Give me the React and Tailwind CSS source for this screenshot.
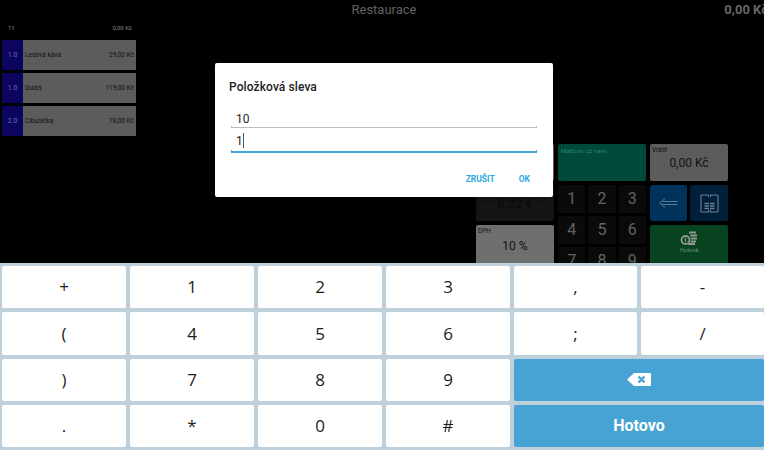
const lines = [
  { qty: "1.0", name: "Ledová káva", price: "29,00 Kč" },
  { qty: "1.0", name: "Guláš", price: "119,00 Kč" },
  { qty: "2.0", name: "Cibulačka", price: "78,00 Kč" },
];

const keyRows = [
  ["+", "1", "2", "3", ",", "-"],
  ["(", "4", "5", "6", ";", "/"],
  [")", "7", "8", "9"],
  [".", "*", "0", "#"],
];

const Key = ({ label }) => (
  <div
    className="flex-1 flex items-center justify-center bg-white rounded-[2px] text-[17px] text-[#1c1c1c]"
    style={{ fontFamily: "'Open Sans', sans-serif" }}
  >
    {label}
  </div>
);

const BlueKey = ({ children }) => (
  <div className="flex-1 flex items-center justify-center bg-[#47a3d3] rounded-[2px] text-white text-[16px] font-bold">
    {children}
  </div>
);

const BackspaceIcon = () => (
  <svg width="24" height="13" viewBox="0 0 24 13">
    <path d="M7 0H23a1 1 0 0 1 1 1V12a1 1 0 0 1-1 1H7L0 6.500Z" fill="#fff" />
    <path d="M11.500 3.500l6 6M17.500 3.500l-6 6" stroke="#47a3d3" strokeWidth="2.400" />
  </svg>
);

const NumKey = ({ label }) => (
  <div className="h-[28px] flex items-center justify-center bg-[#0a0a0a] text-[16px] text-[#626262]">
    {label}
  </div>
);

const Till = () => (
  <div className="flex-1 min-h-0 overflow-hidden flex flex-col bg-black">
    <div className="relative h-5 shrink-0 flex items-center justify-center">
      <span className="text-[13px] text-[#626262] ml-[4px]">Restaurace</span>
      <span className="absolute -right-[4px] text-[13px] font-bold text-[#666]">0,00 Kč</span>
    </div>
    <div className="flex justify-between">
      <div className="w-[136px] pl-[2px]">
        <div className="h-[20px] flex items-center justify-between pl-[6px] pr-[4px] pb-[5px] text-[6px] text-[#8a8a8a]">
          <span>11</span>
          <span>0,00 Kč</span>
        </div>
        <div className="flex flex-col gap-[3px]">
          {lines.map((line) => (
            <div key={line.name} className="h-[30px] flex bg-[#5c5c5c]">
              <div className="w-[21px] flex items-center justify-center bg-[#0c0560] text-[7px] text-[#6f6f9c]">
                {line.qty}
              </div>
              <div className="flex-1 flex items-center justify-between pl-[2px] pr-[2px] pt-[1px] text-[6.500px] text-[#111]">
                <span>{line.name}</span>
                <span>{line.price}</span>
              </div>
            </div>
          ))}
        </div>
      </div>
      <div className="mr-[36px] mt-[124px] grid grid-cols-[78px_88px_78px] gap-x-[4px]">
        <div className="flex flex-col gap-[4px]">
          <div className="h-[37px] bg-[#5c5c5c] rounded-[2px]" />
          <div className="h-[36px] flex items-center justify-center bg-[#151515] rounded-[2px] text-[13px] text-[#0a0a0a] pt-[2px]">
            8,22 €
          </div>
          <div className="h-[60px] bg-[#6f6f6f] rounded-[2px] px-[2px] py-[1px] text-[#111]">
            <div className="text-[6.500px] leading-[10px]">DPH</div>
            <div className="text-[12px] leading-[16px] text-center mt-[2px]">10 %</div>
          </div>
        </div>
        <div className="flex flex-col gap-[4px]">
          <div className="h-[37px] bg-[#004a3b] rounded-[2px] px-[3px] py-[2px] text-[6px] tracking-[0.3px] text-[#2b8a75]">
            Mattoni už není
          </div>
          <div className="grid grid-cols-3 gap-[3px]">
            {["1", "2", "3", "4", "5", "6", "7", "8", "9"].map((n) => (
              <NumKey key={n} label={n} />
            ))}
          </div>
        </div>
        <div className="flex flex-col gap-[4px]">
          <div className="h-[37px] bg-[#5c5c5c] rounded-[2px] px-[2px] py-[1px] text-[#111]">
            <div className="text-[6.500px] leading-[10px]">Vrátit</div>
            <div className="text-[12px] leading-[16px] text-center">0,00 Kč</div>
          </div>
          <div className="flex gap-[3px]">
            <div className="w-[37px] h-[36px] flex items-center justify-center bg-[#00335c] rounded-[2px]">
              <svg width="19" height="10" viewBox="0 0 19 10" fill="none" stroke="#6f8ca6" strokeWidth="0.800">
                <path d="M6 .5L.8 5 6 9.500M3.500 3.500H18.500M3.500 6.500H18.500" />
              </svg>
            </div>
            <div className="w-[38px] h-[36px] flex items-center justify-center bg-[#001f3a] rounded-[2px]">
              <svg width="19" height="19" viewBox="0 0 19 19" fill="none" stroke="#6d7f90" strokeWidth="1.100">
                <path d="M8.500 1H2a1 1 0 0 0-1 1V17a1 1 0 0 0 1 1H8.500V16M10.500 16V18H17a1 1 0 0 0 1-1V2a1 1 0 0 0-1-1H10.500V3M8.500 1V3" />
                <path d="M4.500 9.500H9M10 9.500H14.500M4.500 12H9M10 12H14.500M4.500 14.500H9M10 14.500H14.500" strokeWidth="1.600" />
              </svg>
            </div>
          </div>
          <div className="h-[60px] flex flex-col items-center bg-[#08431f] rounded-[2px] pt-[6px]">
            <svg width="18" height="14" viewBox="0 0 18 14">
              <circle cx="5.500" cy="9" r="4" fill="none" stroke="#8f9a92" strokeWidth="1.800" />
              <path d="M5.500 7V11" stroke="#8f9a92" strokeWidth="1.200" />
              <path d="M9 0.500H16V2.500H9ZM10 3.500H17V5.500H10.500ZM11 6.500H17V8.500H11ZM11 9.500H16V11.500H10.500ZM9 12H15V14H7.500Z" fill="#8f9a92" />
            </svg>
            <span className="text-[6px] leading-[8px] text-[#6b8a76] mt-[1px]">Hotově</span>
          </div>
        </div>
      </div>
    </div>
  </div>
);

const Keyboard = () => (
  <div className="h-[187px] shrink-0 flex flex-col gap-[4px] bg-[#bed0dc] pl-[2px] py-[3px]">
    {keyRows.map((row, i) => (
      <div key={i} className="flex-1 flex gap-[4px]">
        <div className="flex-1 flex gap-[4px]">
          {row.slice(0, 4).map((k) => (
            <Key key={k} label={k} />
          ))}
        </div>
        <div className="w-[250px] shrink-0 flex gap-[4px]">
          {i < 2 && row.slice(4).map((k) => <Key key={k} label={k} />)}
          {i === 2 && (
            <BlueKey>
              <BackspaceIcon />
            </BlueKey>
          )}
          {i === 3 && <BlueKey>Hotovo</BlueKey>}
        </div>
      </div>
    ))}
  </div>
);

const Dialog = () => (
  <div className="absolute left-[215px] top-[63px] w-[338px] h-[134px] bg-white rounded-[2px] shadow-lg px-[14px]">
    <div className="mt-[15px] text-[12px] leading-[18px] font-medium tracking-[0.1px] text-[#222]">Položková sleva</div>
    <div className="mt-[15px] mx-[2px]">
      <div className="h-[15px] pl-[5px] text-[12px] leading-[16px] text-[#222]">10</div>
      <div className="h-[2px] border-x border-b border-[#bdbdbd]" />
    </div>
    <div className="mt-[4px] mx-[2px]">
      <div className="h-[18px] pl-[5px] text-[12px] leading-[18px] text-[#222] flex">
        <span>1</span>
        <span className="w-px h-[15px] bg-[#555] mt-[1px]" />
      </div>
      <div className="h-[3px] border-x border-b-2 border-[#47a9d6]" />
    </div>
    <div className="mt-[20px] flex justify-end gap-[24px] pr-[9px] text-[8.500px] leading-[12px] font-bold text-[#2aa9e0]">
      <span>ZRUŠIT</span>
      <span>OK</span>
    </div>
  </div>
);

const App = () => {
  return (
    <div
      className="relative w-[764px] h-[450px] overflow-hidden flex flex-col bg-black"
      style={{ fontFamily: "Roboto, sans-serif" }}
    >
      <Till />
      <Keyboard />
      <Dialog />
    </div>
  );
};

export default App;
